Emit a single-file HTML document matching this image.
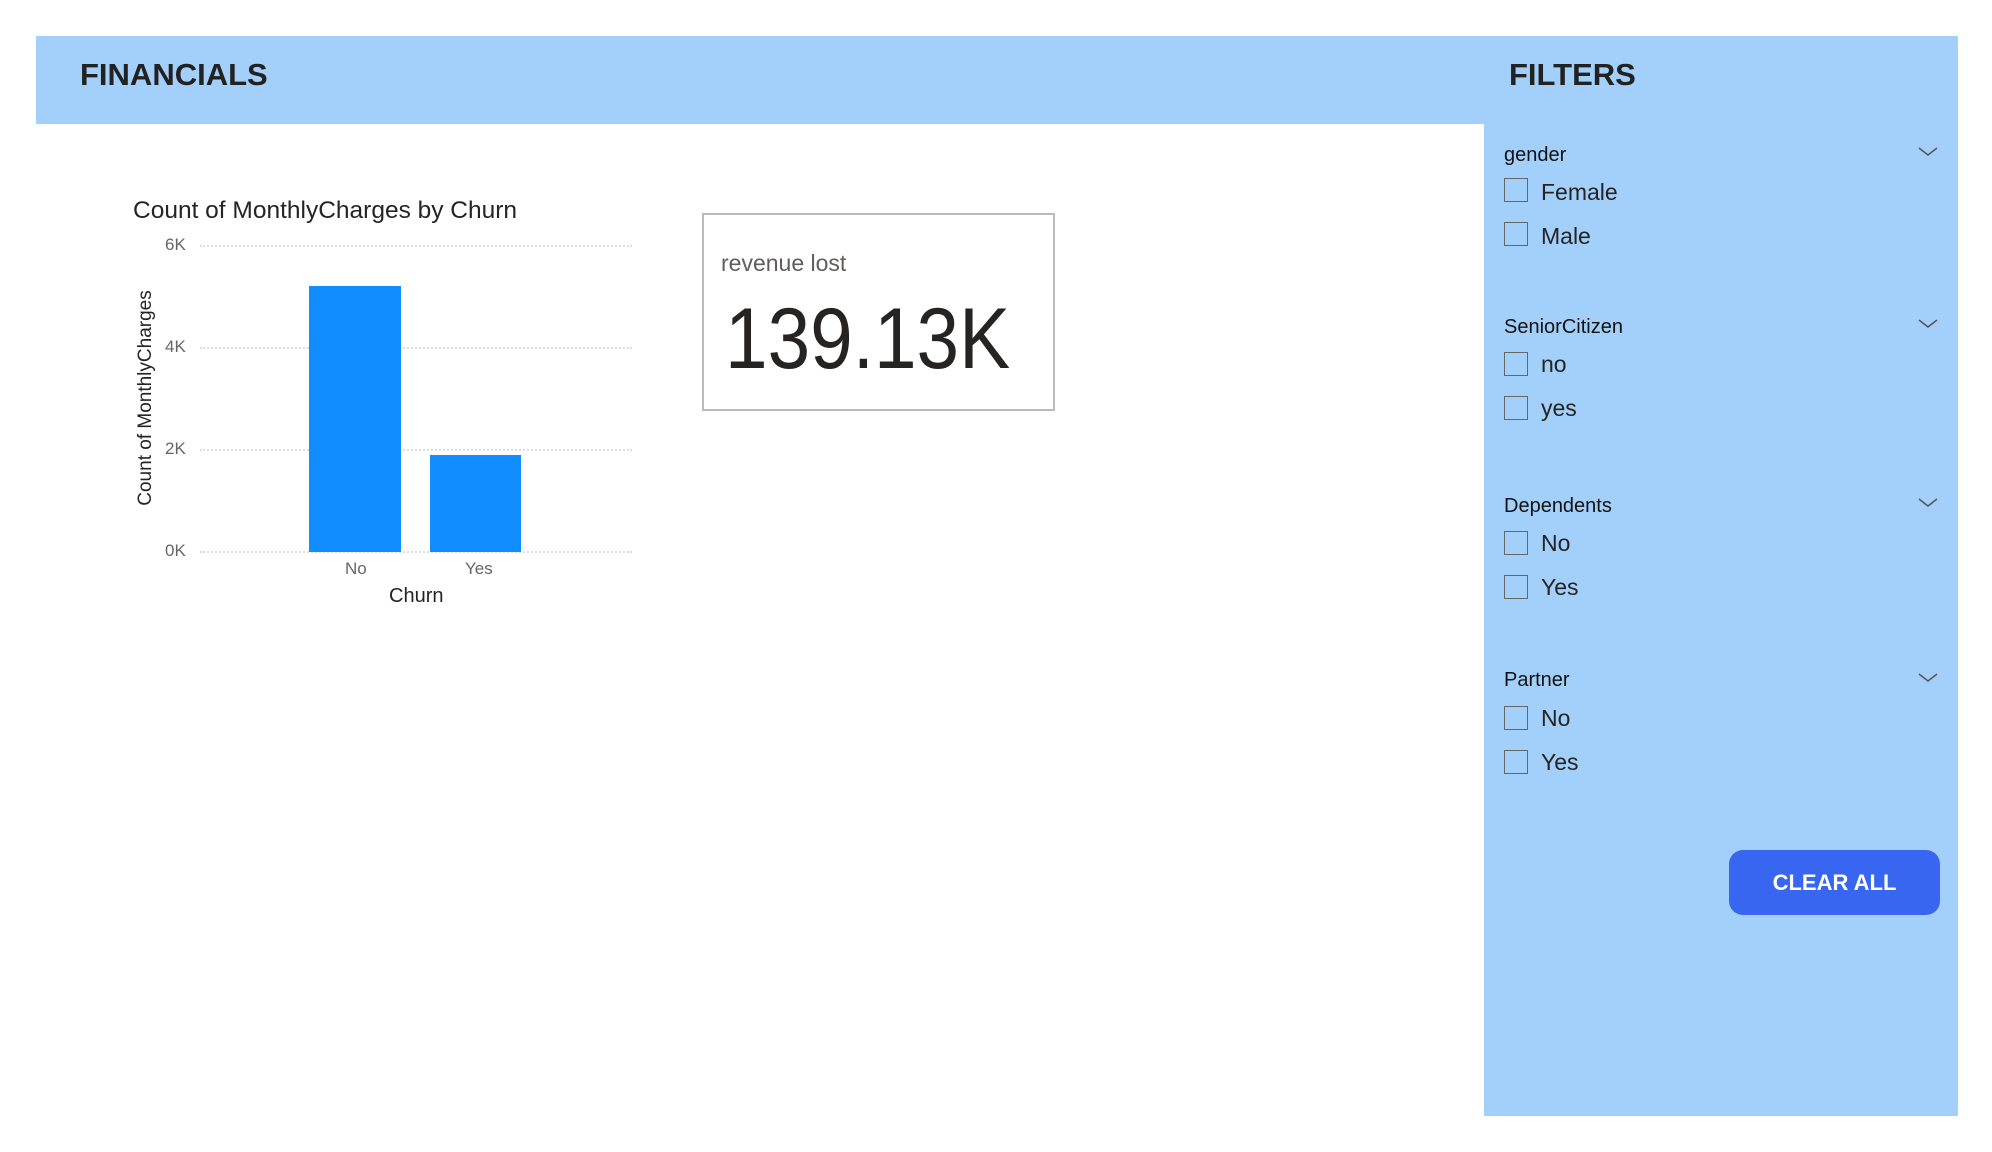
<!DOCTYPE html>
<html><head><meta charset="utf-8"><style>
*{margin:0;padding:0;box-sizing:border-box}
body{width:1992px;height:1152px;background:#fff;position:relative;overflow:hidden;font-family:"Liberation Sans",sans-serif;color:#252423}
.a{position:absolute;white-space:nowrap}
.hdr{left:36px;top:36px;width:1922px;height:88px;background:#a2d0fb}
.side{left:1484px;top:36px;width:474px;height:1080px;background:#a2d0fb}
.grid{position:absolute;left:200px;width:432px;border-top:2px dotted #ddd;height:0}
.lbl{font-size:17px;color:#666}
.fl{font-size:20px;color:#111}
.cb{position:absolute;left:1504px;width:24px;height:24px;border:1.5px solid #666}
.it{font-size:23px;color:#252423;left:1541px}
.chev{position:absolute;left:1918px;width:20px;height:12px}
</style></head><body>
<div class="a hdr"></div>
<div class="a side"></div>
<div class="a" style="left:80px;top:57px;font-size:31px;font-weight:bold;color:#222">FINANCIALS</div>
<div class="a" style="left:1517px;top:57px;font-size:31px;font-weight:bold;color:#222;transform:translateX(-8px)">FILTERS</div>

<div class="a" style="left:133px;top:197px;font-size:24.5px;color:#252423">Count of MonthlyCharges by Churn</div>
<div class="grid" style="top:245px"></div>
<div class="grid" style="top:347px"></div>
<div class="grid" style="top:449px"></div>
<div class="grid" style="top:551px"></div>
<div class="a lbl" style="left:165px;top:235px">6K</div>
<div class="a lbl" style="left:165px;top:337px">4K</div>
<div class="a lbl" style="left:165px;top:439px">2K</div>
<div class="a lbl" style="left:165px;top:541px">0K</div>
<div class="a" style="left:309px;top:286px;width:92px;height:266px;background:#118dff"></div>
<div class="a" style="left:430px;top:455px;width:91px;height:97px;background:#118dff"></div>
<div class="a lbl" style="left:345px;top:559px">No</div>
<div class="a lbl" style="left:465px;top:559px">Yes</div>
<div class="a" style="left:389px;top:585px;font-size:20px;color:#252423">Churn</div>
<div class="a" style="left:146px;top:398px;font-size:19px;color:#252423;transform:translate(-50%,-50%) rotate(-90deg)">Count of MonthlyCharges</div>

<div class="a" style="left:702px;top:213px;width:353px;height:198px;border:2px solid #bbb"></div>
<div class="a" style="left:721px;top:250px;font-size:23px;color:#605e5c">revenue lost</div>
<div class="a" style="left:725px;top:290px;font-size:86px;color:#252423;transform:scaleX(0.89);transform-origin:0 0">139.13K</div>

<div class="a fl" style="left:1504px;top:144px">gender</div>
<div class="cb" style="top:178px"></div><div class="a it" style="top:179px">Female</div>
<div class="cb" style="top:222px"></div><div class="a it" style="top:223px">Male</div>
<div class="a fl" style="left:1504px;top:316px">SeniorCitizen</div>
<div class="cb" style="top:352px"></div><div class="a it" style="top:351px">no</div>
<div class="cb" style="top:396px"></div><div class="a it" style="top:395px">yes</div>
<div class="a fl" style="left:1504px;top:495px">Dependents</div>
<div class="cb" style="top:531px"></div><div class="a it" style="top:530px">No</div>
<div class="cb" style="top:575px"></div><div class="a it" style="top:574px">Yes</div>
<div class="a fl" style="left:1504px;top:669px">Partner</div>
<div class="cb" style="top:706px"></div><div class="a it" style="top:705px">No</div>
<div class="cb" style="top:750px"></div><div class="a it" style="top:749px">Yes</div>

<svg class="chev" style="top:146px" viewBox="0 0 20 12"><path d="M1 2 L10 9 L19 2" fill="none" stroke="#555" stroke-width="1.5"/></svg>
<svg class="chev" style="top:318px" viewBox="0 0 20 12"><path d="M1 2 L10 9 L19 2" fill="none" stroke="#555" stroke-width="1.5"/></svg>
<svg class="chev" style="top:497px" viewBox="0 0 20 12"><path d="M1 2 L10 9 L19 2" fill="none" stroke="#555" stroke-width="1.5"/></svg>
<svg class="chev" style="top:672px" viewBox="0 0 20 12"><path d="M1 2 L10 9 L19 2" fill="none" stroke="#555" stroke-width="1.5"/></svg>

<div class="a" style="left:1729px;top:850px;width:211px;height:65px;background:#3866f0;border-radius:14px;color:#fff;font-weight:bold;font-size:22px;text-align:center;line-height:65px">CLEAR ALL</div>
</body></html>
